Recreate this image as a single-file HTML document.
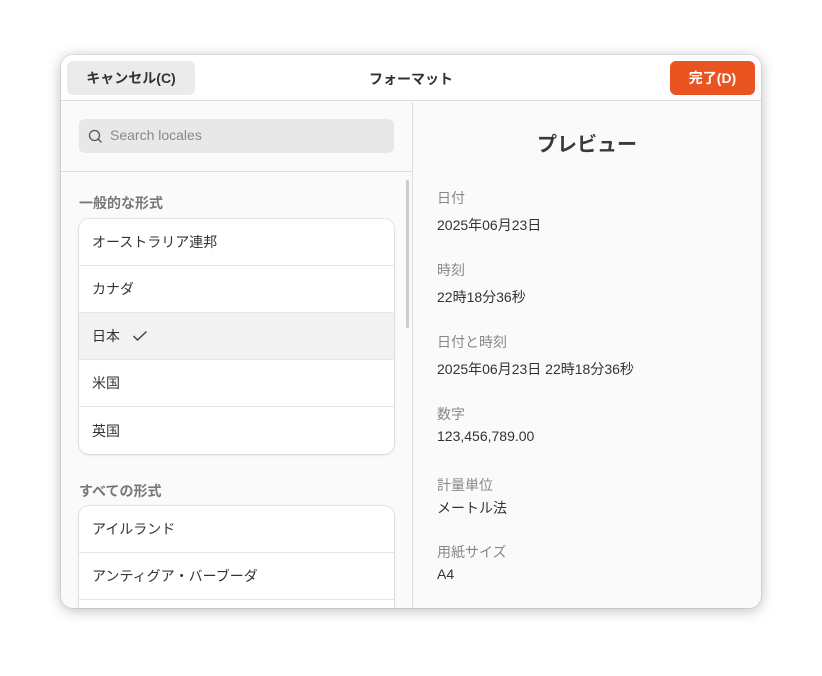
<!DOCTYPE html>
<html><head><meta charset="utf-8"><style>
*{box-sizing:border-box;margin:0;padding:0}
body{width:822px;height:676px;background:#fff;font-family:"Liberation Sans","Noto Sans CJK JP",sans-serif;color:#333;position:relative;overflow:hidden}
.win{position:absolute;left:61px;top:55px;width:700px;height:553px;border-radius:12px;background:#fafafa;overflow:hidden;box-shadow:0 2px 14px rgba(0,0,0,.28),0 0 0 1px rgba(0,0,0,.06)}
.hdr{position:absolute;left:0;top:0;width:700px;height:46px;background:#fff;border-bottom:1px solid #ddd}
.btn{position:absolute;top:6px;height:34px;border-radius:6px;font-size:14px;font-weight:bold;display:flex;align-items:center;justify-content:center}
.t{position:absolute;font-size:14px;white-space:nowrap}
.left{position:absolute;left:0;top:47px;width:352px;bottom:0;background:#fafafa;border-right:1px solid #ddd}
.card{position:absolute;left:18px;width:315px;background:#fff;border-radius:10px;box-shadow:0 0 0 1px rgba(0,0,0,.07),0 1px 3px rgba(0,0,0,.1);overflow:hidden}
.row{height:47px;border-bottom:1px solid #e6e6e6;display:flex;align-items:center;padding-left:13px;font-size:14px;color:#333}
.lbl{color:#888;font-size:14px}
</style></head><body>
<div class="win">
 <div class="hdr">
  <div class="btn" style="left:6px;width:128px;background:#ebebeb;color:#333">キャンセル(C)</div>
  <div class="t" style="left:0;width:700px;text-align:center;top:14px;font-weight:bold">フォーマット</div>
  <div class="btn" style="left:609px;width:85px;background:#e95420;color:#fff">完了(D)</div>
 </div>
 <div class="left">
  <div style="position:absolute;left:18px;top:17px;width:315px;height:34px;background:#e8e8e8;border-radius:6px">
   <svg style="position:absolute;left:9px;top:10px" width="15" height="15" viewBox="0 0 15 15"><circle cx="6.5" cy="6.5" r="5" fill="none" stroke="#555" stroke-width="1.3"/><line x1="10" y1="10" x2="13.5" y2="13.5" stroke="#555" stroke-width="1.3"/></svg>
   <span class="t" style="left:31px;top:8px;color:#888">Search locales</span>
  </div>
  <div style="position:absolute;left:0;top:69px;width:352px;border-top:1px solid #ddd"></div>
  <div style="position:absolute;left:345px;top:78px;width:3px;height:148px;background:#ccc;border-radius:2px"></div>
  <div class="t" style="left:18px;top:91px;color:#777;font-weight:bold">一般的な形式</div>
  <div class="card" style="top:117px">
   <div class="row">オーストラリア連邦</div>
   <div class="row">カナダ</div>
   <div class="row" style="background:#f2f2f2">日本<svg style="margin-left:12px" width="16" height="12" viewBox="0 0 16 12"><path d="M1.5 6l4 4 9-8.5" fill="none" stroke="#444" stroke-width="1.5"/></svg></div>
   <div class="row">米国</div>
   <div class="row" style="border:none">英国</div>
  </div>
  <div class="t" style="left:18px;top:379px;color:#777;font-weight:bold">すべての形式</div>
  <div class="card" style="top:404px;height:140px">
   <div class="row">アイルランド</div>
   <div class="row">アンティグア・バーブーダ</div>
   <div class="row"></div>
  </div>
 </div>
 <div class="t" style="left:352px;width:348px;text-align:center;top:73px;font-size:20px;font-weight:bold;color:#3a3a3a">プレビュー</div>
 <div class="t lbl" style="left:376px;top:133px">日付</div>
 <div class="t" style="left:376px;top:160px">2025年06月23日</div>
 <div class="t lbl" style="left:376px;top:205px">時刻</div>
 <div class="t" style="left:376px;top:232px">22時18分36秒</div>
 <div class="t lbl" style="left:376px;top:277px">日付と時刻</div>
 <div class="t" style="left:376px;top:304px">2025年06月23日 22時18分36秒</div>
 <div class="t lbl" style="left:376px;top:349px">数字</div>
 <div class="t" style="left:376px;top:373px">123,456,789.00</div>
 <div class="t lbl" style="left:376px;top:420px">計量単位</div>
 <div class="t" style="left:376px;top:443px">メートル法</div>
 <div class="t lbl" style="left:376px;top:487px">用紙サイズ</div>
 <div class="t" style="left:376px;top:511px">A4</div>
</div>
</body></html>
